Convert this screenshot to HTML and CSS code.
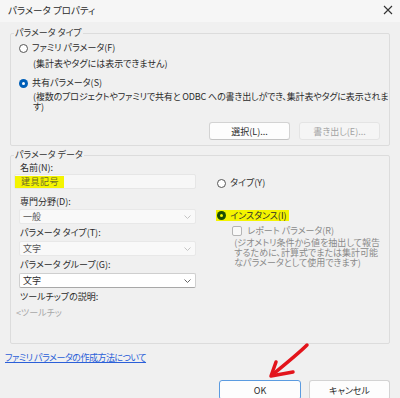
FILE: index.html
```html
<!DOCTYPE html>
<html lang="ja">
<head>
  <meta charset="UTF-8">
  <title>パラメータ プロパティ</title>
  <link rel="stylesheet" href="styles.css">
</head>
<body>
  <div class="dialog">
    <!-- Title bar -->
    <div class="titlebar">
      <span class="title">パラメータ プロパティ</span>
      <svg class="close" width="10" height="10" viewBox="0 0 10 10">
        <path d="M1 1 L9 9 M9 1 L1 9" stroke="#333" stroke-width="1.1" fill="none"/>
      </svg>
    </div>

    <div class="content">
      <!-- Parameter type -->
      <fieldset class="group group-type">
        <legend>パラメータ タイプ</legend>
        <label class="radio-row"><span class="radio"></span>ファミリ パラメータ(F)</label>
        <p class="note">(集計表やタグには表示できません)</p>
        <label class="radio-row radio-shared"><span class="radio checked"></span>共有パラメータ(S)</label>
        <p class="note note-wide">
          <span class="line">(複数のプロジェクトやファミリで共有と ODBC への書き出しができ、集計表やタグに表示されま</span>
          <span class="line">す)</span>
        </p>
        <div class="group-buttons">
          <button class="btn">選択(L)...</button>
          <button class="btn" disabled>書き出し(E)...</button>
        </div>
      </fieldset>

      <!-- Parameter data -->
      <fieldset class="group group-data">
        <legend>パラメータ データ</legend>
        <div class="data-cols">
          <div class="col-left">
            <div class="field-label first">名前(N):</div>
            <div class="name-input"><span class="marker">建具記号</span></div>

            <div class="field-label">専門分野(D):</div>
            <div class="combo disabled"><span>一般</span><svg class="chevron" width="7" height="4" viewBox="0 0 7 4"><path d="M0.5 0.5 L3.5 3.5 L6.5 0.5" fill="none" stroke="currentColor"/></svg></div>

            <div class="field-label">パラメータ タイプ(T):</div>
            <div class="combo disabled"><span>文字</span><svg class="chevron" width="7" height="4" viewBox="0 0 7 4"><path d="M0.5 0.5 L3.5 3.5 L6.5 0.5" fill="none" stroke="currentColor"/></svg></div>

            <div class="field-label">パラメータ グループ(G):</div>
            <div class="combo"><span>文字</span><svg class="chevron" width="7" height="4" viewBox="0 0 7 4"><path d="M0.5 0.5 L3.5 3.5 L6.5 0.5" fill="none" stroke="currentColor"/></svg></div>

            <div class="field-label tooltip-label">ツールチップの説明:</div>
            <div class="tooltip-value">&lt;ツールチッ</div>
          </div>

          <div class="col-right">
            <label class="radio-row radio-type"><span class="radio"></span>タイプ(Y)</label>
            <label class="radio-row radio-instance"><span class="marker"><span class="radio checked"></span>インスタンス(I)</span></label>
            <label class="check-row"><span class="checkbox"></span>レポート パラメータ(R)</label>
            <p class="note-disabled">
              <span class="line">(ジオメトリ条件から値を抽出して報告</span>
              <span class="line">するために、計算式でまたは集計可能</span>
              <span class="line">なパラメータとして使用できます)</span>
            </p>
          </div>
        </div>
      </fieldset>

      <a class="help-link" href="#">ファミリ パラメータの作成方法について</a>

      <div class="dialog-buttons">
        <button class="btn btn-default">OK</button>
        <button class="btn">キャンセル</button>
      </div>
    </div>

    <!-- hand-drawn arrow pointing at OK -->
    <svg class="arrow" width="60" height="50" viewBox="0 0 60 50">
      <path d="M47 5 C40 12 28 22 12 35" fill="none" stroke="#e3141b" stroke-width="3.5" stroke-linecap="round"/>
      <path d="M16 22 L11 36 L33 32" fill="none" stroke="#e3141b" stroke-width="3.5" stroke-linecap="round" stroke-linejoin="round"/>
    </svg>
  </div>
</body>
</html>
```

FILE: styles.css
```css
body {
  margin: 0;
  padding: 0;
  background: #f0f0f0;
  font-family: "Noto Sans CJK JP", "Noto Sans", sans-serif;
  font-size: 9px;
  font-feature-settings: "palt";
  color: #2b2b2b;
  overflow: hidden;
}

.dialog {
  position: relative;
  width: 400px;
  height: 398px;
}

.titlebar {
  height: 22px;
  background: #f6f6f6;
  display: flex;
  align-items: center;
  justify-content: space-between;
  padding: 0 7px 2px 8px;
  box-sizing: border-box;
}

.title {
  font-size: 9.5px;
  line-height: 12px;
}

.content {
  padding: 6px 10px 0 10px;
}

p {
  margin: 0;
}

.line {
  display: block;
  height: 10px;
  line-height: 10px;
  white-space: nowrap;
}

/* group boxes */
.group {
  margin: 0;
  border: 1px solid #dcdcdc;
  border-radius: 2px;
  padding: 0 9px 5px 8px;
  min-inline-size: 0;
}

.group legend {
  padding: 0 1px;
  margin-left: -5px;
  line-height: 10px;
  color: #333;
}

.group-data {
  margin-top: 4px;
  padding: 0 9px 25px 3px;
}

.group-data legend {
  margin-left: 0;
}

/* radios */
.radio-row {
  display: flex;
  align-items: center;
  gap: 4px;
  line-height: 12px;
}

.radio {
  width: 9px;
  height: 9px;
  box-sizing: border-box;
  border: 1px solid #555;
  border-radius: 50%;
  background: #fff;
  flex: none;
}

.radio.checked {
  border: none;
  background: #005fb8;
  display: flex;
  align-items: center;
  justify-content: center;
}

.radio.checked::after {
  content: '';
  width: 3px;
  height: 3px;
  border-radius: 50%;
  background: #fff;
}

.group-type .radio-row {
  margin-top: 4px;
}

.group-type .radio-shared {
  margin-top: 7px;
}

.note {
  margin-top: 4px;
  margin-left: 14px;
  line-height: 12px;
  white-space: nowrap;
}

.note-wide {
  margin-top: 3px;
  letter-spacing: -0.15px;
}

.group-buttons {
  display: flex;
  justify-content: flex-end;
  gap: 9px;
  margin-top: 10px;
}

.btn {
  height: 18px;
  width: 81px;
  padding: 0;
  font-family: inherit;
  font-size: 9px;
  font-feature-settings: "palt";
  color: #2b2b2b;
  background: #fdfdfd;
  border: 1px solid #d3d3d3;
  border-bottom-color: #c4c4c4;
  border-radius: 3px;
}

.btn:disabled {
  background: #f5f5f5;
  border-color: #e4e4e4;
  color: #a3a3a3;
}

/* parameter data */
.data-cols {
  display: flex;
  gap: 21px;
}

.col-left {
  width: 183px;
  display: flex;
  flex-direction: column;
}

.field-label {
  line-height: 10px;
  margin: 8px 0 2px 6px;
}

.field-label.first {
  margin-top: 3px;
  margin-bottom: 1px;
}

.name-input {
  height: 15px;
  box-sizing: border-box;
  background: #f7f7f7;
  border: 1px solid #e6e6e6;
  border-radius: 2px;
  display: flex;
  align-items: center;
}

.marker {
  background: #f4f400;
}

.name-input .marker {
  display: inline-block;
  line-height: 12px;
  padding: 0 5px 0 6px;
  color: #6b6b28;
  letter-spacing: 0.5px;
}

.combo {
  margin-left: 5px;
  height: 15px;
  box-sizing: border-box;
  display: flex;
  align-items: center;
  justify-content: space-between;
  padding: 0 4px 0 3px;
  background: #fff;
  border: 1px solid #cfcfcf;
  border-bottom-color: #a8a8a8;
  border-radius: 2px;
  color: #2b2b2b;
}

.combo.disabled {
  background: #f9f9f9;
  border-color: #e8e8e8;
  color: #555;
}

.combo .chevron {
  color: #666;
}

.combo.disabled .chevron {
  color: #c4c4c4;
}

.col-left .combo + .field-label {
  margin-top: 4px;
  margin-bottom: 3px;
}

.col-left .tooltip-label {
  margin-top: 5px;
  margin-bottom: 0;
}

.tooltip-value {
  margin: 3px 0 0 2px;
  line-height: 10px;
  color: #a8a8a8;
}

.col-right {
  flex: 1;
}

.radio-type {
  margin-top: 17px;
}

.radio-instance {
  margin-top: 21px;
  margin-left: -1px;
}

.radio-instance .marker {
  display: flex;
  align-items: center;
  gap: 4px;
  padding: 0 2px 0 1px;
  line-height: 11px;
}

.radio-instance .radio.checked {
  background: #1b4d05;
}

.radio-instance .radio.checked::after {
  background: #f4f400;
}

.check-row {
  display: flex;
  align-items: center;
  gap: 5px;
  margin: 5px 0 0 15px;
  line-height: 10px;
  color: #8a8a8a;
}

.checkbox {
  width: 10px;
  height: 10px;
  box-sizing: border-box;
  border: 1px solid #b4b4b4;
  border-radius: 2px;
  background: #f8f8f8;
}

.note-disabled {
  margin: 2px 0 0 17px;
  color: #8a8a8a;
}

.help-link {
  display: block;
  margin: 8px 0 0 -5px;
  line-height: 12px;
  color: #2b5fd8;
  text-decoration: underline;
  letter-spacing: -0.5px;
  width: max-content;
}

.dialog-buttons {
  display: flex;
  justify-content: flex-end;
  gap: 8px;
  margin-top: 16px;
}

.dialog-buttons .btn {
  height: 20px;
}

.btn-default {
  border: 1px solid #5b9be0;
  width: 82px;
}

.arrow {
  position: absolute;
  left: 260px;
  top: 340px;
}
```
